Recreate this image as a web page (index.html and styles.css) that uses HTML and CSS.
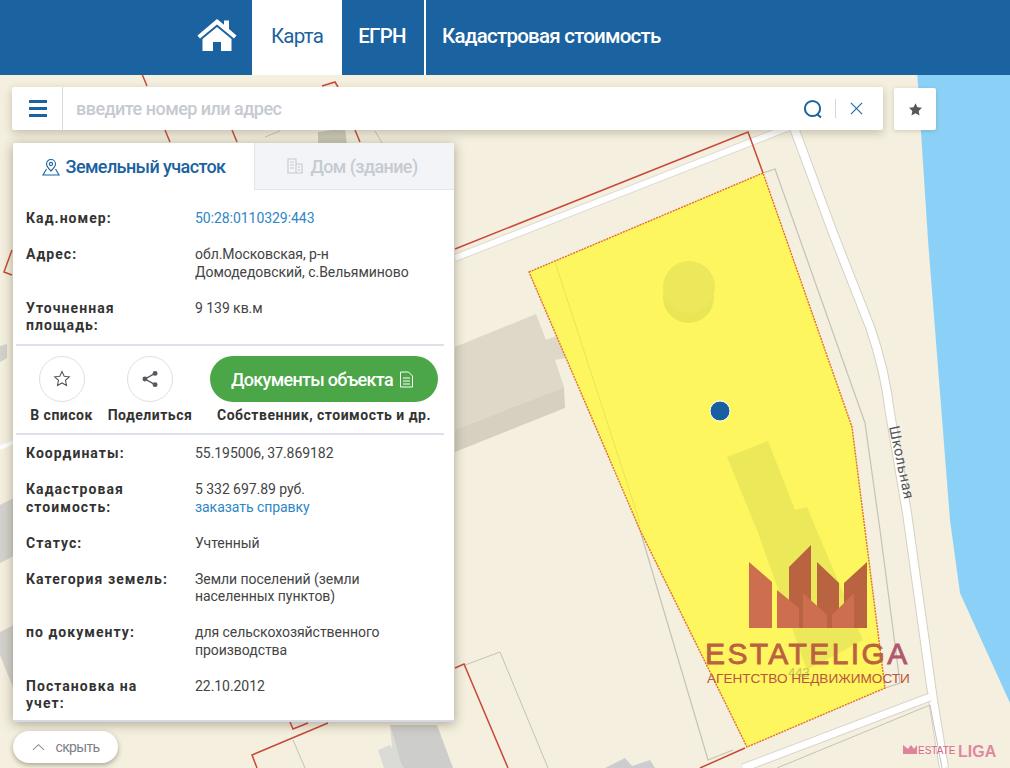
FILE: index.html
```html
<!DOCTYPE html>
<html lang="ru">
<head>
<meta charset="utf-8">
<title>Карта</title>
<link rel="stylesheet" href="styles.css">
</head>
<body>
<svg class="map" viewBox="0 0 1010 768" xmlns="http://www.w3.org/2000/svg">
  <rect width="1010" height="768" fill="#f4efde"/>
  <path d="M917 70H1010V703L960 593L950 520L928 240Z" fill="#8bd1f7"/>
  <g fill="none">
    <path d="M455 258L787 128" stroke="#dcdad0" stroke-width="8"/>
    <path d="M455 258L787 128" stroke="#fff" stroke-width="6"/>
    <path d="M793 125L833 233L870 327Q885 370 890 413L907 513L933 700L944 768" stroke="#d4d2c6" stroke-width="10"/>
    <path d="M793 125L833 233L870 327Q885 370 890 413L907 513L933 700L944 768" stroke="#fff" stroke-width="8"/>
    <path d="M743 768L930 697" stroke="#d8d6ca" stroke-width="9"/>
    <path d="M743 768L930 697" stroke="#fff" stroke-width="7"/>
    <path d="M763 173L775 169L865 423L880 530L900 683L885 688" stroke="#c4c3b6" stroke-width="1.200"/>
    <path d="M637 520L708 760L733 750" stroke="#c4c3b6" stroke-width="1.200"/>
    <path d="M777 768L930 705L942 768" stroke="#c4c3b6" stroke-width="1"/>
    <path d="M465 665L500 652L548 768" stroke="#c4c3b6" stroke-width="1"/>
    <path d="M293 740L305 768" stroke="#c4c3b6" stroke-width="1"/>
    <path d="M265 137L280 131M375 131L382 143" stroke="#c4c3b6" stroke-width="1"/>
  </g>
  <path d="M455 347L536 314L546 340L560 335L571 357L555 360L564 387L455 430Z" fill="#ddd8c8"/>
  <path d="M455 430L564 387L565 408L455 452Z" fill="#d5d0c0"/>
  <path d="M318 132L345 128L347 145H318Z" fill="#cbc8b6"/>
  <path d="M390 725H437L453 768H402Z" fill="#cdcdcb"/>
  <path d="M390 725L402 768H394Z M378 750L390 745L404 768H384Z" fill="#dadad6"/>
  <path d="M605 768L625 758L632 766L650 760L655 768Z" fill="#cdcdd0"/>
  <path d="M0 346L7 344V358L0 362Z M0 505L14 498V556L0 563Z M0 632L14 625V690L0 655Z" fill="#d2d1cb"/>
  <path d="M0 448L14 442" stroke="#fff" stroke-width="4"/>
  <g fill="none" stroke="#c9483b" stroke-width="1.500">
    <path d="M142 74L147 86M165 130L170 142M232 130L237 142M355 130L360 142M322 86L335 82L338 87"/>
    <path d="M455 249L748 132L763 173"/>
    <path d="M257 768L252 755L328 723M290 722L293 729L308 723"/>
    <path d="M455 668L464 664L508 768"/>
    <path d="M700 768L745 748"/>
    <path d="M12 250L4 272L12 275"/>
  </g>
  <path d="M529 272L763 173L852 427L885 688L747 747L640 530Z" fill="#fdf65f" stroke="#e0702a" stroke-width="1.400" stroke-dasharray="2 1"/>
  <path d="M555 262L640 523" stroke="#e8e455" stroke-width="1" fill="none"/>
  <circle cx="688.500" cy="297.500" r="25.500" fill="#e9e656"/>
  <circle cx="689" cy="287" r="26" fill="#ebe85c"/>
  <path d="M727 457L768 441L795 510L807 507L863 640L807 670L757 530Z" fill="#ebe85a"/>
  <circle cx="720" cy="411" r="10" fill="#185f9f" stroke="#fff" stroke-width="1"/>
  <text class="street" transform="translate(889 427) rotate(78)">Школьная</text>
  <text class="parcel-no" x="788" y="677">443</text>
  <g fill="#ba6340">
    <path d="M789 567L811 545V628H789Z"/>
    <path d="M817 562L839 583V628H817Z"/>
    <path d="M844 583L867 562V628H844Z"/>
  </g>
  <g fill="#cd6e4e">
    <path d="M749 562L772 582V628H749Z"/>
    <path d="M777 590L799 608V628H777Z"/>
    <path d="M803 593L827 615V628H803Z"/>
    <path d="M832 615L854 593V628H832Z"/>
  </g>
  <text class="logo-big" x="705" y="664">ESTATELIG<tspan class="logo-pink">A</tspan></text>
  <text class="logo-sub" x="707" y="683">АГЕНТСТВО НЕДВИЖИМОСТИ</text>
  <path d="M903 754V745L908 749L911 745L914 749L917 745V754Z" fill="#d9668a" fill-opacity=".8"/>
  <text class="logo-small-a" x="918" y="754">ESTATE</text>
  <text class="logo-small-b" x="958" y="757">LIGA</text>
</svg>

<div class="page">
  <header class="topbar">
    <svg class="home-icon" viewBox="0 0 40 33" xmlns="http://www.w3.org/2000/svg">
      <path d="M20 1L0.500 17.500L3 20.500L20 6.500L37 20.500L39.500 17.500L32 11V2.500H27V6.800Z M20 9L5.500 21V33H16V24H24V33H34.500V21Z" fill="#fff"/>
    </svg>
    <nav class="tabs">
      <a class="tab tab-active">Карта</a>
      <a class="tab tab-egrn">ЕГРН</a>
      <a class="tab tab-cost">Кадастровая стоимость</a>
    </nav>
  </header>

  <div class="searchrow">
    <div class="search">
      <button class="burger"><i></i><i></i><i></i></button>
      <span class="placeholder">введите номер или адрес</span>
      <svg class="search-icon" viewBox="0 0 20 20" xmlns="http://www.w3.org/2000/svg"><circle cx="9.500" cy="9.500" r="7.600" fill="none" stroke="#1a639f" stroke-width="2"/><path d="M14 15L18 18.500" stroke="#1a639f" stroke-width="2"/></svg>
      <span class="search-sep"></span>
      <svg class="close-icon" viewBox="0 0 14 14" xmlns="http://www.w3.org/2000/svg"><path d="M1 1L13 13M13 1L1 13" stroke="#2a6ea6" stroke-width="1.300"/></svg>
    </div>
    <button class="fav">
      <svg viewBox="0 0 16 16" xmlns="http://www.w3.org/2000/svg"><path d="M8 1.200L10.100 5.600L14.900 6.200L11.400 9.500L12.300 14.300L8 12L3.700 14.300L4.600 9.500L1.100 6.200L5.900 5.600Z" fill="#55585c"/></svg>
    </button>
  </div>

  <section class="panel">
    <div class="panel-tabs">
      <div class="ptab ptab-active">
        <svg class="pin" viewBox="0 0 18 18" xmlns="http://www.w3.org/2000/svg"><g fill="none" stroke="#1a639f" stroke-width="1.100"><path d="M9 13C6.500 10.500 4.500 8.500 4.500 6a4.500 4.500 0 0 1 9 0C13.500 8.500 11.500 10.500 9 13Z"/><circle cx="9" cy="6" r="1.600"/><path d="M4.500 11L1 17H17L13.500 11"/></g></svg>
        <span>Земельный участок</span>
      </div>
      <div class="ptab ptab-off">
        <svg class="bld" viewBox="0 0 18 18" xmlns="http://www.w3.org/2000/svg"><g fill="none" stroke="#c6cbd2" stroke-width="1.100"><path d="M2 16V2H10V16M10 7H16V16M1 16H17"/><path d="M4 5H8M4 8H8M4 11H8M12 10H14M12 13H14"/></g></svg>
        <span>Дом (здание)</span>
      </div>
    </div>

    <dl class="rows rows-top">
      <div class="row"><dt>Кад.номер:</dt><dd><a class="link">50:28:0110329:443</a></dd></div>
      <div class="row"><dt>Адрес:</dt><dd>обл.Московская, р-н<br>Домодедовский, с.Вельяминово</dd></div>
      <div class="row"><dt>Уточненная<br>площадь:</dt><dd>9 139 кв.м</dd></div>
    </dl>

    <div class="actions">
      <div class="action action-list">
        <span class="circle"><svg viewBox="0 0 18 18" xmlns="http://www.w3.org/2000/svg"><path d="M9 1.500L11.200 6.200L16.300 6.800L12.500 10.300L13.500 15.400L9 12.900L4.500 15.400L5.500 10.300L1.700 6.800L6.800 6.200Z" fill="none" stroke="#55585c" stroke-width="1.100"/></svg></span>
        <b>В список</b>
      </div>
      <div class="action action-share">
        <span class="circle"><svg viewBox="0 0 16 16" xmlns="http://www.w3.org/2000/svg"><path d="M12.500 3L3.500 8L12.500 13" fill="none" stroke="#55585c" stroke-width="1.200"/><circle cx="12.500" cy="3" r="2.200" fill="#55585c"/><circle cx="3.500" cy="8" r="2.200" fill="#55585c"/><circle cx="12.500" cy="13" r="2.200" fill="#55585c"/></svg></span>
        <b>Поделиться</b>
      </div>
      <div class="action action-docs">
        <a class="docs-btn">Документы объекта
          <svg viewBox="0 0 14 17" xmlns="http://www.w3.org/2000/svg"><path d="M1 1H9L13 5V16H1Z M3.500 7H10.500M3.500 10H10.500M3.500 13H10.500" fill="none" stroke="#fff" stroke-width="1"/></svg>
        </a>
        <b>Собственник, стоимость и др.</b>
      </div>
    </div>

    <dl class="rows rows-bottom">
      <div class="row"><dt>Координаты:</dt><dd>55.195006, 37.869182</dd></div>
      <div class="row"><dt>Кадастровая<br>стоимость:</dt><dd>5 332 697.89 руб.<br><a class="link">заказать справку</a></dd></div>
      <div class="row"><dt>Статус:</dt><dd>Учтенный</dd></div>
      <div class="row"><dt>Категория земель:</dt><dd>Земли поселений (земли<br>населенных пунктов)</dd></div>
      <div class="row"><dt>по документу:</dt><dd>для сельскохозяйственного<br>производства</dd></div>
      <div class="row"><dt>Постановка на<br>учет:</dt><dd>22.10.2012</dd></div>
    </dl>
  </section>

  <button class="hide-btn">
    <svg viewBox="0 0 14 8" xmlns="http://www.w3.org/2000/svg"><path d="M1 7L7 1.500L13 7" fill="none" stroke="#8a8d92" stroke-width="1.100"/></svg>
    <span>скрыть</span>
  </button>
</div>
</body>
</html>
```
FILE: styles.css
```css
* { box-sizing: border-box; }
html, body { margin: 0; padding: 0; height: 100%; }
body {
  width: 1010px;
  height: 768px;
  overflow: hidden;
  position: relative;
  font-family: Roboto, "Liberation Sans", sans-serif;
  background: #f4efde;
}
.map { position: absolute; left: 0; top: 0; width: 1010px; height: 768px; }
.street { font: 14.500px Roboto, sans-serif; fill: #555; letter-spacing: .6px; }
.parcel-no { font: 13px Roboto, sans-serif; fill: #c8c45a; }
.logo-big { font: 400 30px "Liberation Sans", sans-serif; fill: #bb6040; stroke: #bb6040; stroke-width: .8px; letter-spacing: 2.400px; }
.logo-pink { fill: #b3566a; stroke: #b3566a; }
.logo-sub { font: 13.600px "Liberation Sans", sans-serif; fill: #b9553f; }
.logo-small-a { font: 10px "Liberation Sans", sans-serif; fill: #d9668a; }
.logo-small-b { font: 700 16px "Liberation Sans", sans-serif; fill: #d9668a; fill-opacity: .75; }

.page { position: relative; display: flex; flex-direction: column; height: 768px; }

.topbar {
  height: 75px;
  background: #1a62a0;
  display: flex;
  padding-left: 197px;
  flex: none;
}
.home-icon { width: 40px; height: 33px; margin-top: 18px; margin-right: 15px; }
.tabs { display: flex; }
.tab {
  display: flex;
  align-items: center;
  height: 75px;
  color: #fff;
  font-size: 20.500px;
  font-weight: 500;
  letter-spacing: -.75px;
  padding-bottom: 3px;
}
.tab-active { width: 90px; background: #fff; color: #1a62a0; justify-content: center; font-weight: 400; }
.tab-egrn { width: 84px; justify-content: center; border-right: 2px solid #fff; padding-right: 2px; }
.tab-cost { padding-left: 16px; }

.searchrow { display: flex; margin: 12px 0 0 12px; align-items: flex-start; flex: none; }
.search {
  width: 871px;
  height: 43px;
  background: #fff;
  border-radius: 2px;
  display: flex;
  align-items: center;
  box-shadow: 0 3px 8px rgba(90, 85, 60, .3);
}
.burger {
  width: 51px;
  height: 43px;
  border: 0;
  border-right: 1px solid #d9dadc;
  background: none;
  display: flex;
  flex-direction: column;
  justify-content: center;
  align-items: center;
  gap: 4px;
  padding: 0 0 0 1px;
  flex: none;
}
.burger i { display: block; width: 18px; height: 3px; background: #1a62a0; }
.placeholder { color: #c6cad1; font-size: 18px; font-weight: 500; letter-spacing: -.52px; margin-left: 13px; flex: 1; }
.search-icon { width: 20px; height: 20px; flex: none; }
.search-sep { width: 1px; height: 19px; background: #d4d6d9; margin: 0 14px 0 12px; flex: none; }
.close-icon { width: 13px; height: 13px; margin-right: 20px; flex: none; }
.fav {
  width: 42px;
  height: 42px;
  margin: 1px 0 0 11px;
  background: #fff;
  border: 0;
  border-radius: 2px;
  padding: 0;
  display: flex;
  align-items: center;
  justify-content: center;
  box-shadow: 0 1px 4px rgba(90, 85, 60, .25);
}
.fav svg { width: 15px; height: 15px; }

.panel {
  width: 441px;
  height: 579px;
  margin: 13px 0 0 13px;
  background: #fff;
  border-bottom: 2px solid #d5d9e3;
  box-shadow: 0 2px 12px rgba(60, 55, 30, .4);
  flex: none;
  border-radius: 2px;
}
.panel-tabs { display: flex; height: 47px; }
.ptab {
  display: flex;
  align-items: center;
  justify-content: center;
  gap: 6px;
  font-size: 18px;
  font-weight: 500;
  letter-spacing: -.6px;
}
.ptab-active { width: 241px; color: #1a62a0; }
.ptab-active .pin { width: 18px; height: 18px; }
.ptab-off { width: 200px; color: #c6cad1; background: #f2f4f8; border-left: 1px solid #e2e5ea; border-bottom: 1px solid #e2e5ea; padding-right: 5px; }
.ptab-off .bld { width: 18px; height: 18px; }

.rows { margin: 0; padding: 0 0 0 13px; font-size: 14px; line-height: 17.500px; }
.row { display: flex; }
dt { width: 169px; flex: none; font-weight: 700; color: #333; letter-spacing: 1.050px; }
dd { margin: 0; color: #444; letter-spacing: -.05px; }
.link { color: #2f86c5; }
.rows-top { padding-top: 20px; height: 154px; display: flex; flex-direction: column; gap: 18.500px; }
.rows-bottom { padding-top: 10px; display: flex; flex-direction: column; gap: 18.500px; }

.actions {
  height: 91px;
  margin: 0 0 0 3px;
  width: 428px;
  border-top: 2px solid #dde1ea;
  border-bottom: 2px solid #dde1ea;
  display: flex;
  padding-top: 10px;
}
.action { display: flex; flex-direction: column; align-items: center; }
.action b { font-size: 14px; font-weight: 700; color: #333; letter-spacing: .5px; white-space: nowrap; margin-top: 4px; line-height: 18px; }
.action-list { width: 91px; }
.action-share { width: 86px; }
.action-docs { width: 240px; margin-left: 11px; }
.circle {
  width: 46px;
  height: 46px;
  border-radius: 50%;
  border: 1px solid #dfe0e2;
  display: flex;
  align-items: center;
  justify-content: center;
}
.circle svg { width: 18px; height: 18px; }
.docs-btn {
  width: 228px;
  height: 46px;
  border-radius: 24px;
  background: #4aa647;
  color: #fff;
  font-size: 18px;
  font-weight: 500;
  letter-spacing: -.7px;
  display: flex;
  align-items: center;
  justify-content: center;
  gap: 6px;
  padding-right: 3px;
}
.docs-btn svg { width: 15px; height: 17px; }

.hide-btn {
  width: 105px;
  height: 32px;
  margin: 9px 0 0 13px;
  flex: none;
  border: 0;
  border-radius: 16px;
  background: #fff;
  box-shadow: 0 2px 5px rgba(60, 55, 30, .4);
  color: #7d8187;
  font: 14px Roboto, sans-serif;
  display: flex;
  align-items: center;
  justify-content: center;
  gap: 11px;
  padding: 0;
}
.hide-btn span { letter-spacing: -.7px; }
.hide-btn svg { width: 13px; height: 8px; }
```
